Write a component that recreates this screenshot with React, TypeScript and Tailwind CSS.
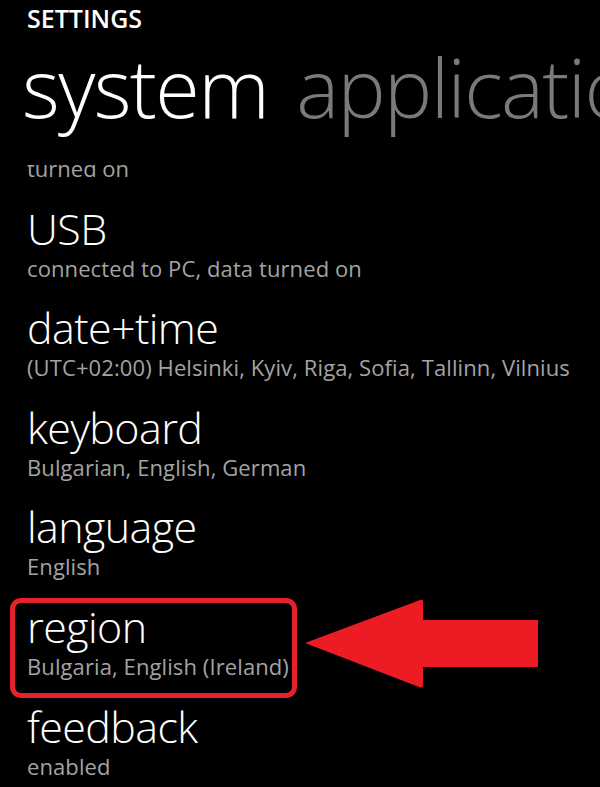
import React from "react";

const items: { title: string; sub: string; highlight?: boolean }[] = [
  { title: "USB", sub: "connected to PC, data turned on" },
  { title: "date+time", sub: "(UTC+02:00) Helsinki, Kyiv, Riga, Sofia, Tallinn, Vilnius" },
  { title: "keyboard", sub: "Bulgarian, English, German" },
  { title: "language", sub: "English" },
  { title: "region", sub: "Bulgaria, English (Ireland)", highlight: true },
  { title: "feedback", sub: "enabled" },
];

export default function App() {
  return (
    <div
      className="relative w-[600px] h-[787px] bg-black overflow-hidden flex flex-col text-white"
      style={{ fontFamily: '"Open Sans", "Noto Sans", sans-serif' }}
    >
      <div className="pl-[27px] pt-[4px] text-[25px] leading-[28px] font-semibold">
        SETTINGS
      </div>
      <div className="pl-[22px] mt-[10px] flex gap-[28px] whitespace-nowrap text-[81px] leading-[90px] font-light tracking-[-1.6px]">
        <span className="text-white">system</span>
        <span className="text-[#7a7a7a]">applications</span>
      </div>
      <div className="mt-[33px] flex-1 overflow-hidden pl-[27px]">
        <div className="-mt-[11px] text-[22px] leading-[28px] text-[#a3a3a3]">
          turned on
        </div>
        <div className="mt-[21.6px] flex flex-col">
          {items.map((it) => (
            <div key={it.title} className="relative pb-[21.6px]">
              {it.highlight && (
                <>
                  <div className="absolute left-[-17px] top-[-4px] w-[287px] h-[100px] rounded-[11px] border-[5px] border-[#e8202a]" />
                  <svg
                    className="absolute left-[276px] top-[-3px]"
                    width="236"
                    height="96"
                    viewBox="0 0 236 96"
                  >
                    <path
                      d="M2 44 L117 1 Q120 0 120 3 L120 21 L235 21 L235 68 L120 68 L120 86 Q120 90 116 88 Z"
                      fill="#ed1c24"
                    />
                  </svg>
                </>
              )}
              <div className="relative text-[43px] leading-[50px] font-light tracking-[-0.6px]">
                {it.title}
              </div>
              <div className="relative text-[22px] leading-[28px] text-[#a3a3a3] tracking-[0.1px] whitespace-nowrap">
                {it.sub}
              </div>
            </div>
          ))}
        </div>
      </div>
    </div>
  );
}
